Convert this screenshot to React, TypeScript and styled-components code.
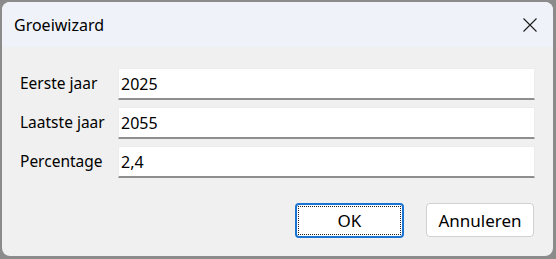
import React from "react";
import styled, { createGlobalStyle } from "styled-components";

const Global = createGlobalStyle`
  html, body { margin: 0; padding: 0; background: #8b8b8b; }
  body { width: 556px; height: 259px; overflow: hidden; }
  * { box-sizing: border-box; }
`;

const Screen = styled.div`
  width: 556px;
  height: 259px;
  padding: 2px 3px 3px 2px;
  background: #8b8b8b;
  font-family: "Noto Sans", "Open Sans", sans-serif;
`;

const Window = styled.div`
  width: 551px;
  height: 254px;
  border-radius: 8px;
  overflow: hidden;
  display: flex;
  flex-direction: column;
  background: #f0f0f0;
`;

const TitleBar = styled.div`
  height: 45px;
  flex: none;
  background: #eff3f9;
  display: flex;
  align-items: center;
  justify-content: space-between;
  padding: 0 16px 0 12px;
`;

const Title = styled.span`
  font-size: 16px;
  color: #000;
`;

const CloseIcon = styled.svg`
  width: 14px;
  height: 14px;
  display: block;
`;

const Body = styled.div`
  flex: 1;
  display: flex;
  flex-direction: column;
  padding: 21px 18px 18px 18px;
`;

const Form = styled.div`
  display: grid;
  grid-template-columns: 98px 1fr;
  grid-auto-rows: 32px;
  row-gap: 7px;
  align-items: center;
`;

const Label = styled.label`
  font-size: 15.5px;
  color: #000;
  padding-bottom: 2px;
  white-space: nowrap;
`;

const Field = styled.div`
  height: 32px;
  background: #fff;
  border: 1px solid #ececec;
  border-bottom: 2px solid #8e8e8e;
  border-radius: 1px;
  display: flex;
  align-items: center;
  padding-left: 2px;
  font-size: 16px;
  color: #000;
`;

const Buttons = styled.div`
  margin-top: auto;
  display: flex;
  justify-content: flex-end;
  gap: 22px;
  padding-right: 1px;
`;

const Button = styled.button<{ $focused?: boolean }>`
  width: ${(p) => (p.$focused ? "109px" : "108px")};
  height: ${(p) => (p.$focused ? "35px" : "34px")};
  background: #fff;
  border: ${(p) => (p.$focused ? "2px solid #1a73d1" : "1px solid #d0d0d0")};
  border-radius: 4px;
  font-family: "Noto Sans", "Open Sans", sans-serif;
  font-size: 17px;
  color: #000;
  padding: ${(p) => (p.$focused ? "1px" : "0")};
  display: flex;
  align-items: center;
  justify-content: center;
`;

const FocusRect = styled.span`
  width: 100%;
  height: 100%;
  border: 1px dotted #222;
  display: flex;
  align-items: center;
  justify-content: center;
`;

export default function App() {
  return (
    <>
      <Global />
      <Screen>
        <Window>
          <TitleBar>
            <Title>Groeiwizard</Title>
            <CloseIcon viewBox="0 0 14 14">
              <path d="M0.5 0.5 L13.5 13.5 M13.5 0.5 L0.5 13.5" stroke="#1b1b1b" strokeWidth="1.1" fill="none" />
            </CloseIcon>
          </TitleBar>
          <Body>
            <Form>
              <Label>Eerste jaar</Label>
              <Field>2025</Field>
              <Label>Laatste jaar</Label>
              <Field>2055</Field>
              <Label>Percentage</Label>
              <Field>2,4</Field>
            </Form>
            <Buttons>
              <Button $focused>
                <FocusRect>OK</FocusRect>
              </Button>
              <Button>Annuleren</Button>
            </Buttons>
          </Body>
        </Window>
      </Screen>
    </>
  );
}
